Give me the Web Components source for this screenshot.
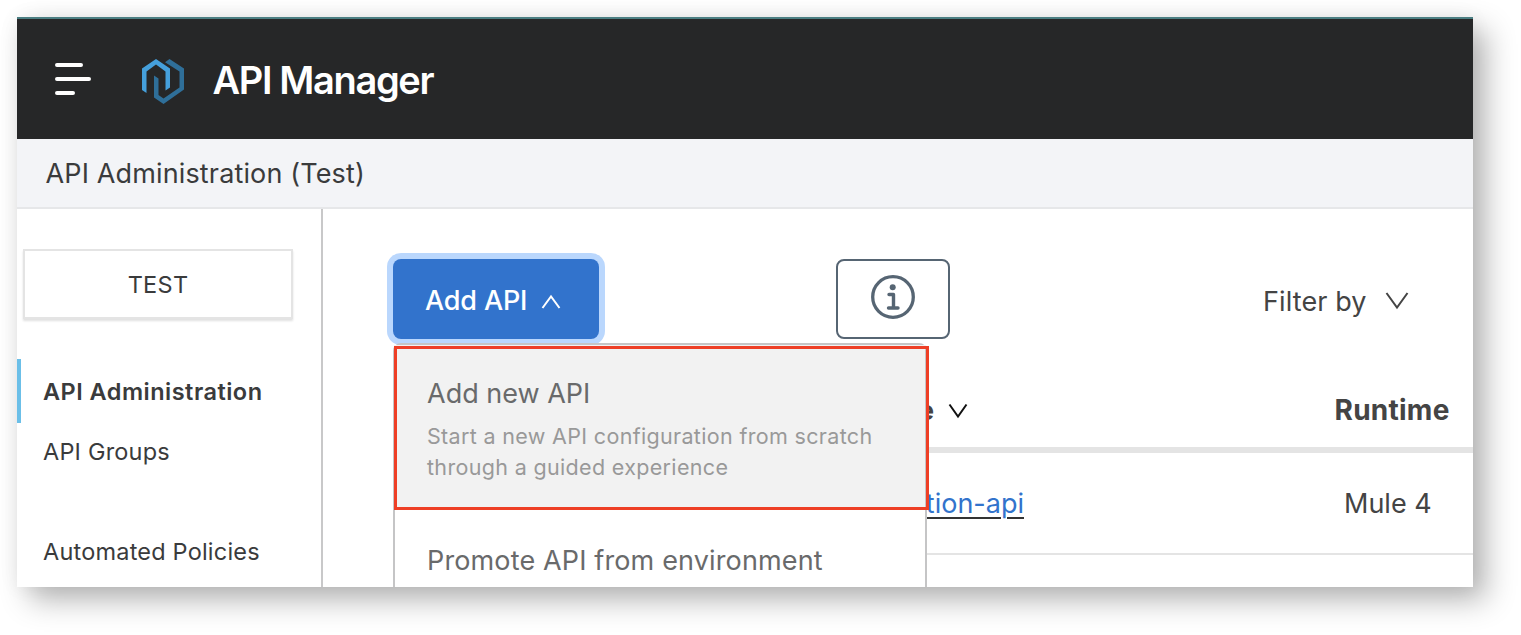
<!DOCTYPE html>
<html lang="en">
<head>
<meta charset="utf-8">
<title>API Manager</title>
<style>
html,body{margin:0;height:100%;background:#fff;overflow:hidden}
body{font-family:Inter,"Liberation Sans",sans-serif;font-size:27px;color:#3a3b3c}
</style>
</head>
<body>
<api-window></api-window>
<script>
function define(name, html) {
  const t = document.createElement('template');
  t.innerHTML = html;
  customElements.define(name, class extends HTMLElement {
    constructor() {
      super();
      this.attachShadow({mode: 'open'}).append(t.content.cloneNode(true));
    }
  });
}

define('app-header', `<style>
:host{display:flex;align-items:center;box-sizing:border-box;height:122px;flex:none;border-top:2px solid #4b7e82;background:#262728;padding-left:37px;color:#fff}
svg{flex:none;display:block}
.logo{margin:6px 0 0 49px}
h1{margin:1px 0 0 27.500px;font-size:38px;line-height:46px;font-weight:600;letter-spacing:var(--ls-title);white-space:nowrap}
</style>
<svg class="bars" width="38" height="34" viewBox="0 0 38 34" stroke="#fff" stroke-width="4" stroke-linecap="round"><path d="M3 3H27M3 17H35M3 31H19"/></svg>
<svg class="logo" width="44" height="48" viewBox="0 0 44 48"><path fill="#2f6f99" d="M24 4.2 28.500 1 43 10.500V31.500L22.500 46 13 39.500V17.500L17.500 20.500V37L22.500 40.500 38.500 29.500V13.500Z"/><path fill="#45a0dc" d="M1 10.500 15 1 29 10.500V29.500L24.500 32.500V13.500L15 6.500 5.500 13.500V35L1 32Z"/></svg>
<h1><slot></slot></h1>`);

define('context-bar', `<style>
:host{display:flex;align-items:center;box-sizing:border-box;height:70px;flex:none;background:#f3f4f7;border-bottom:2px solid #e6e7e9;padding-left:28.500px;letter-spacing:var(--ls-bar);white-space:nowrap}
</style><slot></slot>`);

define('env-button', `<style>
:host{display:flex;align-items:center;justify-content:center;box-sizing:border-box;width:270px;height:70px;margin:0 0 40px 6px;border:2px solid #e4e4e4;box-shadow:0 2px 2px rgba(0,0,0,.12);font-size:23.500px;letter-spacing:var(--ls-env)}
</style><slot></slot>`);

define('nav-item', `<style>
:host{display:flex;align-items:center;box-sizing:border-box;height:64px;padding-left:22px;border-left:4px solid transparent;font-size:23.500px;letter-spacing:var(--ls,0);white-space:nowrap;margin-top:var(--gap,0)}
:host([active]){border-left-color:#6bbfe8;font-weight:600}
</style><slot></slot>`);

define('side-nav', `<style>
:host{display:block;box-sizing:border-box;width:306px;flex:none;border-right:2px solid #c8c8c9;padding-top:40px;overflow:hidden}
</style><slot></slot>`);

define('primary-button', `<style>
:host{display:flex;align-items:center;box-sizing:border-box;width:206px;height:80px;padding:2px 0 0 32px;border-radius:8px;background:#3273cc;box-shadow:0 0 0 6px #bad7fd;color:#fff;letter-spacing:var(--ls-add);font-weight:500;white-space:nowrap}
svg{margin:4px 0 0 14px}
</style><slot></slot><svg width="20" height="16" viewBox="0 0 20 16" fill="none" stroke="#fff" stroke-width="2"><path d="M1.500 14 10 2.500 18.500 14"/></svg>`);

define('info-button', `<style>
:host{display:flex;justify-content:center;box-sizing:border-box;width:114px;height:80px;padding-top:14px;border:2px solid #566573;border-radius:8px}
</style><svg width="44" height="44" viewBox="0 0 44 44" fill="none" stroke="#566573"><circle cx="22" cy="22" r="20.300" stroke-width="3.300"/><circle cx="21.700" cy="12.300" r="3" fill="#566573" stroke="none"/><path stroke-width="3.400" stroke-linecap="round" stroke-linejoin="round" d="M18 19.500H22.500V33M17.500 33H27"/></svg>`);

define('filter-by', `<style>
:host{display:flex;align-items:center;letter-spacing:var(--ls-filter);white-space:nowrap;padding-top:4px;color:#444}
svg{margin-left:18px}
</style><slot></slot><svg width="24" height="18" viewBox="0 0 24 18" fill="none" stroke="#444" stroke-width="2"><path d="M1.500 1 12 15.500 22.500 1"/></svg>`);

define('api-table', `<style>
:host{display:block;color:#444}
.row{display:flex;align-items:center;box-sizing:border-box;white-space:nowrap}
.head{height:80px;border-bottom:6px solid #e4e4e4;font-weight:700}
.body{height:102px;border-bottom:2px solid #e4e4e4}
.name{width:631px;display:flex;align-items:center;justify-content:flex-end;box-sizing:border-box}
.head .name{padding-right:56px}
svg{margin:2px 0 0 14px}
a{color:#3273cc;text-decoration:underline #333;text-decoration-thickness:2px;text-underline-offset:4px}
.rt{margin-left:310.500px;font-size:28px;letter-spacing:.25px}
.m4{margin-left:320px}
</style>
<div class="row head"><div class="name">e<svg width="20" height="16" viewBox="0 0 20 16" fill="none" stroke="#111" stroke-width="2"><path d="M1.500 1.500 10 13.500 18.500 1.500"/></svg></div><div class="rt">Runtime</div></div>
<div class="row body"><div class="name"><a>tion-api</a></div><div class="m4">Mule 4</div></div>`);

define('menu-item', `<style>
:host{display:block;padding:35px 0 0 32px;color:#696a6b;white-space:nowrap}
.t{line-height:34px;letter-spacing:var(--ls,0)}
::slotted(p){margin:10px 0 0;font-size:21.500px;line-height:31px;color:#999;letter-spacing:var(--ls-desc)}
:host([highlighted]){box-sizing:border-box;height:164px;background:#f2f2f2;padding-top:32px}
</style><div class="t"><slot name="title"></slot></div><slot></slot>`);

define('drop-menu', `<style>
:host{position:absolute;left:0;top:84px;width:534px;height:244px;box-sizing:border-box;border:2px solid #c5c5c6;border-bottom:0;border-radius:8px 8px 0 0;background:#fff}
.mark{position:absolute;left:-1px;top:1px;width:535px;height:164px;box-sizing:border-box;border:3px solid #ee3f26}
</style><slot></slot><div class="mark"></div>`);

define('api-window', `<style>
:host{display:flex;flex-direction:column;margin:17px;width:1456px;height:570px;position:absolute;top:0;left:0;box-shadow:13px 13px 28px rgba(0,0,0,.29),0 0 20px rgba(0,0,0,.06);background:#fff;
--ls-title:-1.35px;--ls-bar:.14px;--ls-env:.3px;--ls-add:-.15px;--ls-filter:.1px;--ls-desc:.33px}
.body{display:flex;flex:1;min-height:0;overflow:hidden}
main{flex:1;min-width:0;padding:50px 0 0 70px}
.tools{display:flex;position:relative;height:80px;z-index:1;margin-bottom:34px}
info-button{margin-left:237px}
filter-by{margin-left:313px}
</style>
<app-header>API Manager</app-header>
<context-bar>API Administration (Test)</context-bar>
<div class="body">
<side-nav>
<env-button>TEST</env-button>
<nav-item active style="--ls:.48px">API Administration</nav-item>
<nav-item style="--ls:.2px;--gap:-4px">API Groups</nav-item>
<nav-item style="--ls:.2px;--gap:36px">Automated Policies</nav-item>
</side-nav>
<main>
<div class="tools">
<drop-menu>
<menu-item highlighted style="--ls:0px"><span slot="title">Add new API</span><p>Start a new API configuration from scratch<br>through a guided experience</p></menu-item>
<menu-item style="--ls:.14px"><span slot="title">Promote API from environment</span></menu-item>
</drop-menu>
<primary-button>Add API</primary-button>
<info-button></info-button>
<filter-by>Filter by</filter-by>
</div>
<api-table></api-table>
</main>
</div>`);
</script>
</body>
</html>
